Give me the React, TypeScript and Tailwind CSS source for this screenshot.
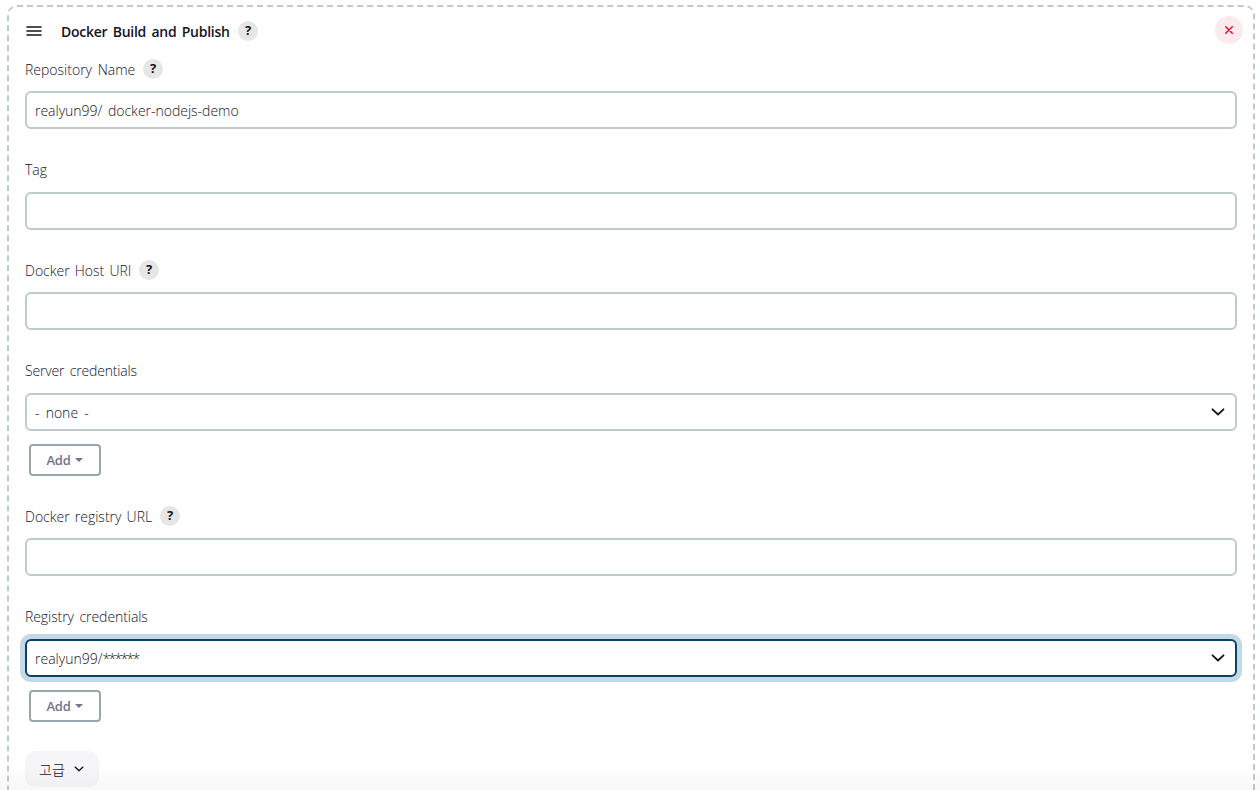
import { ReactNode, useState } from "react";

function HelpButton() {
  return (
    <button className="flex h-5 w-5 items-center justify-center rounded-full bg-[#e6e6e6] pb-px font-['Noto_Sans',sans-serif] text-[13px] leading-none font-bold text-[#14141f]">
      ?
    </button>
  );
}

function Chevron({ className }: { className: string }) {
  return (
    <svg
      className={className}
      viewBox="0 0 14 8"
      fill="none"
      stroke="#14141f"
      strokeWidth="1.8"
      strokeLinecap="round"
      strokeLinejoin="round"
    >
      <path d="M1.5 1.3 7 6.5l5.5-5.2" />
    </svg>
  );
}

function Field({
  label,
  labelClass = "",
  help,
  children,
}: {
  label: string;
  labelClass?: string;
  help?: boolean;
  children: ReactNode;
}) {
  return (
    <div>
      <div className="mb-3 flex h-5 items-center gap-2">
        <label className={`pt-px whitespace-nowrap ${labelClass}`}>
          {label}
        </label>
        {help && <HelpButton />}
      </div>
      {children}
    </div>
  );
}

function TextInput({ initial = "" }: { initial?: string }) {
  const [value, setValue] = useState(initial);
  return (
    <input
      value={value}
      onChange={(event) => setValue(event.target.value)}
      className="block h-[38px] w-full rounded-md border-2 border-[#bfcacf] bg-white px-2 tracking-[-0.01px] outline-none [word-spacing:2px]"
    />
  );
}

function SelectBox({
  focused,
  children,
}: {
  focused?: boolean;
  children: ReactNode;
}) {
  return (
    <>
      <button
        className={`flex h-[38px] w-full items-center justify-between rounded-md border-2 bg-white pr-2.5 pl-2 ${focused ? "border-[#0b4060] shadow-[0_0_0_5px_#c3d9e6]" : "border-[#bfcacf]"}`}
      >
        <span className="pt-0.5 [word-spacing:2.5px]">{children}</span>
        <Chevron className="h-2 w-3.5" />
      </button>
      <div className="h-[45px] pt-[13px] pl-1">
        <button className="flex h-8 w-[72px] items-center justify-center gap-[5px] rounded-[4px] border-2 border-[#98a6b0] font-['Open_Sans',sans-serif] text-[13px] font-semibold tracking-[-0.3px] text-[#73738c]">
          Add
          <svg className="h-1 w-2" viewBox="0 0 8 4" fill="#73738c">
            <path d="M0 0h8L4 4z" />
          </svg>
        </button>
      </div>
    </>
  );
}

export default function App() {
  return (
    <div className="relative h-[790px] w-[1260px] overflow-hidden bg-white pt-[5px] pl-[7px] font-['Open_Sans','Noto_Sans_CJK_KR',sans-serif] text-sm font-[330] text-[#14141f]">
      <div className="h-[830px] w-[1248px] rounded-[10px] border-2 border-dashed border-[#bfcacf] px-4">
        <div className="flex h-[52.4px] justify-between">
          <div className="mt-3.5 flex h-5 items-center">
            <svg
              className="mr-[19px] ml-px h-[10px] w-4"
              viewBox="0 0 16 10"
              stroke="#14141f"
              strokeWidth="1.6"
              strokeLinecap="round"
            >
              <path d="M1 1h14M1 5h14M1 9h14" />
            </svg>
            <h1 className="mr-2 w-[169px] pt-0.5 font-semibold tracking-[-0.26px] whitespace-nowrap [word-spacing:2px]">
              Docker Build and Publish
            </h1>
            <HelpButton />
          </div>
          <button className="mt-[9px] -mr-1.5 flex h-7 w-7 items-center justify-center rounded-full bg-[#fdeaec]">
            <svg
              className="h-2 w-2"
              viewBox="0 0 8 8"
              stroke="#e6001f"
              strokeWidth="1.3"
              strokeLinecap="round"
            >
              <path d="m.7.7 6.6 6.6M7.3.7.7 7.3" />
            </svg>
          </button>
        </div>

        <div className="flex flex-col gap-[30.5px]">
          <Field
            label="Repository Name"
            labelClass="w-[110px] [word-spacing:2px]"
            help
          >
            <TextInput initial="realyun99/ docker-nodejs-demo" />
          </Field>
          <Field label="Tag">
            <TextInput />
          </Field>
          <Field
            label="Docker Host URI"
            labelClass="w-[106px] [word-spacing:1.5px]"
            help
          >
            <TextInput />
          </Field>
          <Field
            label="Server credentials"
            labelClass="tracking-[-0.17px] [word-spacing:2px]"
          >
            <SelectBox>- none -</SelectBox>
          </Field>
          <Field
            label="Docker registry URL"
            labelClass="w-[127px] [word-spacing:1.5px]"
            help
          >
            <TextInput />
          </Field>
          <Field
            label="Registry credentials"
            labelClass="tracking-[-0.07px] [word-spacing:2px]"
          >
            <SelectBox focused>
              realyun99/<span className="tracking-[-1.7px]">******</span>
            </SelectBox>
          </Field>
        </div>

        <button className="mt-[29px] flex h-9 w-[74px] items-center justify-center gap-[9px] rounded-[10px] bg-[#f6f6f9] pr-px font-['Noto_Sans_CJK_KR',sans-serif] text-sm font-light">
          <span>고급</span>
          <Chevron className="h-1.5 w-2.5" />
        </button>
      </div>
      <div className="pointer-events-none absolute inset-x-0 bottom-0 h-6 bg-linear-to-b from-black/0 to-black/3" />
    </div>
  );
}
